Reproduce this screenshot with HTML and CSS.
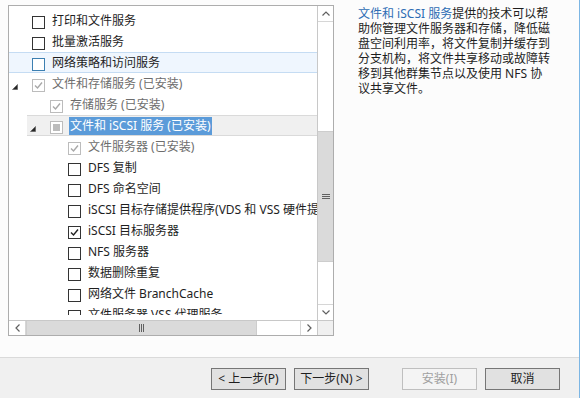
FILE: index.html
```html
<!DOCTYPE html>
<html lang="zh-CN">
<head>
<meta charset="utf-8">
<title>添加角色和功能</title>
<link rel="stylesheet" href="styles.css">
</head>
<body>
<div class="window">
  <div class="main">
    <div class="tree-box">
      <div class="tree-view">
        <div class="tree">
          <div class="row lv1"><span class="exp"></span><span class="cb"></span><span class="label">打印和文件服务</span></div>
          <div class="row lv1"><span class="exp"></span><span class="cb"></span><span class="label">批量激活服务</span></div>
          <div class="row lv1 hover"><span class="exp"></span><span class="cb"></span><span class="label">网络策略和访问服务</span></div>
          <div class="row lv1 off"><span class="exp"><svg width="6" height="6" viewBox="0 0 6 6"><polygon points="5.5,0.5 5.5,5.5 0.5,5.5" fill="#262626" stroke="#555" stroke-width="0.6"/></svg></span><span class="cb"><svg width="11" height="11" viewBox="0 0 11 11"><polyline points="2,5.5 4.5,8 9,2.5" fill="none" stroke="#a8a8a8" stroke-width="1.4"/></svg></span><span class="label">文件和存储服务 (已安装)</span></div>
          <div class="row lv2 off"><span class="exp"></span><span class="cb"><svg width="11" height="11" viewBox="0 0 11 11"><polyline points="2,5.5 4.5,8 9,2.5" fill="none" stroke="#a8a8a8" stroke-width="1.4"/></svg></span><span class="label">存储服务 (已安装)</span></div>
          <div class="row lv2 off sel"><span class="exp"><svg width="6" height="6" viewBox="0 0 6 6"><polygon points="5.5,0.5 5.5,5.5 0.5,5.5" fill="#262626" stroke="#555" stroke-width="0.6"/></svg></span><span class="cb ind"><span class="fill"></span></span><span class="label">文件和 iSCSI 服务 (已安装)</span></div>
          <div class="row lv3 off"><span class="exp"></span><span class="cb"><svg width="11" height="11" viewBox="0 0 11 11"><polyline points="2,5.5 4.5,8 9,2.5" fill="none" stroke="#a8a8a8" stroke-width="1.4"/></svg></span><span class="label">文件服务器 (已安装)</span></div>
          <div class="row lv3"><span class="exp"></span><span class="cb"></span><span class="label">DFS 复制</span></div>
          <div class="row lv3"><span class="exp"></span><span class="cb"></span><span class="label">DFS 命名空间</span></div>
          <div class="row lv3"><span class="exp"></span><span class="cb"></span><span class="label">iSCSI 目标存储提供程序(VDS 和 VSS 硬件提供程序)</span></div>
          <div class="row lv3"><span class="exp"></span><span class="cb"><svg width="11" height="11" viewBox="0 0 11 11"><polyline points="2,5.5 4.5,8 9,2.5" fill="none" stroke="#222" stroke-width="1.4"/></svg></span><span class="label">iSCSI 目标服务器</span></div>
          <div class="row lv3"><span class="exp"></span><span class="cb"></span><span class="label">NFS 服务器</span></div>
          <div class="row lv3"><span class="exp"></span><span class="cb"></span><span class="label">数据删除重复</span></div>
          <div class="row lv3"><span class="exp"></span><span class="cb"></span><span class="label">网络文件 BranchCache</span></div>
          <div class="row lv3"><span class="exp"></span><span class="cb"></span><span class="label">文件服务器 VSS 代理服务</span></div>
        </div>
      </div>
      <div class="vscroll">
        <div class="sbtn vup"><svg width="8" height="5" viewBox="0 0 8 5"><polyline points="0.5,4.5 4,1 7.5,4.5" fill="none" stroke="#606060" stroke-width="1.2"/></svg></div>
        <div class="vtrack-top"></div>
        <div class="vthumb"><svg width="8" height="7" viewBox="0 0 8 7"><path d="M0 1.5H8M0 3.5H8M0 5.5H8" stroke="#606060" stroke-width="1"/></svg></div>
        <div class="vtrack-bottom"></div>
        <div class="sbtn vdown"><svg width="8" height="5" viewBox="0 0 8 5"><polyline points="0.5,0.5 4,4 7.5,0.5" fill="none" stroke="#606060" stroke-width="1.2"/></svg></div>
      </div>
      <div class="hscroll">
        <div class="sbtn hleft"><svg width="5" height="8" viewBox="0 0 5 8"><polyline points="4.5,0.5 1,4 4.5,7.5" fill="none" stroke="#606060" stroke-width="1.2"/></svg></div>
        <div class="hthumb"><svg width="7" height="8" viewBox="0 0 7 8"><path d="M1.5 0V8M3.5 0V8M5.5 0V8" stroke="#606060" stroke-width="1"/></svg></div>
        <div class="htrack"></div>
        <div class="sbtn hright"><svg width="5" height="8" viewBox="0 0 5 8"><polyline points="0.5,0.5 4,4 0.5,7.5" fill="none" stroke="#606060" stroke-width="1.2"/></svg></div>
      </div>
      <div class="corner"></div>
    </div>
    <p class="desc"><span class="link">文件和 iSCSI 服务</span>提供的技术可以帮助你管理文件服务器和存储，降低磁盘空间利用率，将文件复制并缓存到分支机构，将文件共享移动或故障转移到其他群集节点以及使用 NFS 协议共享文件。</p>
  </div>
  <div class="footer">
    <button class="btn">&lt; 上一步(P)</button>
    <button class="btn">下一步(N) &gt;</button>
    <button class="btn disabled gap">安装(I)</button>
    <button class="btn">取消</button>
  </div>
</div>
</body>
</html>
```
FILE: styles.css
```css
html, body {
  margin: 0;
  padding: 0;
}

body {
  font-family: "Segoe UI", "Noto Sans", "Noto Sans CJK SC", sans-serif;
  font-size: 12px;
  color: #1e1e1e;
  background: #fcfcfc;
}

.window {
  width: 580px;
  height: 398px;
  box-sizing: border-box;
  border-right: 1px solid #7cb6e4;
  display: flex;
  flex-direction: column;
}

.main {
  height: 357px;
  box-sizing: border-box;
  display: flex;
  align-items: flex-start;
  gap: 24px;
  padding: 5px 0 0 8px;
}

/* tree box */
.tree-box {
  width: 326px;
  height: 331px;
  box-sizing: border-box;
  border: 1px solid #adadad;
  background: #fff;
  display: grid;
  grid-template-columns: 308px 16px;
  grid-template-rows: 314px 15px;
}

.tree-view {
  overflow: hidden;
  margin-bottom: 5px;
}

.tree {
  width: max-content;
  min-width: 100%;
  padding-top: 4px;
}

.row {
  height: 21px;
  box-sizing: border-box;
  border-top: 1px solid transparent;
  border-bottom: 1px solid transparent;
  display: flex;
  align-items: center;
  white-space: nowrap;
}

.lv2 { margin-left: 18px; }
.lv3 { margin-left: 36px; }

.row.hover {
  background: #eff6fe;
  border-color: #c5dcf3;
}

.row.sel {
  background: #f0f0f0;
  border-color: #dadada;
}

.exp {
  width: 23px;
  flex: none;
  align-self: stretch;
}

.exp svg {
  display: block;
  margin: 10px 0 0 3px;
}

.cb {
  width: 13px;
  height: 13px;
  box-sizing: border-box;
  flex: none;
  align-self: flex-start;
  margin-top: 5px;
  border: 1px solid #333;
  background: #fff;
}

.cb svg {
  display: block;
}

.row.hover .cb {
  border-color: #3c7fb1;
}

.row.off .cb {
  border-color: #bcbcbc;
}

.cb.ind {
  padding: 2px;
}

.cb.ind .fill {
  display: block;
  width: 7px;
  height: 7px;
  background: #bcbcbc;
}

.label {
  margin-left: 7px;
  line-height: 19px;
  color: #1e1e1e;
}

.row.off .label {
  color: #6d6d6d;
}

.row.sel .label {
  margin-left: 6px;
  padding: 0 1px;
  line-height: 18px;
  background: #5b9bd9;
  color: #fff;
}

/* scrollbars */
.vscroll {
  border-left: 1px solid #c8c8c8;
  display: flex;
  flex-direction: column;
  background: #fff;
}

.sbtn {
  display: flex;
  align-items: center;
  justify-content: center;
  flex: none;
  background: #fff;
}

.vup {
  height: 16px;
  border-bottom: 1px solid #d6d6d6;
  box-sizing: border-box;
}

.vdown {
  height: 16px;
  border-top: 1px solid #d6d6d6;
  box-sizing: border-box;
}

.vtrack-top {
  height: 109px;
  flex: none;
}

.vthumb {
  height: 131px;
  flex: none;
  background: #dadada;
  border-top: 1px solid #cdcdcd;
  border-bottom: 1px solid #cdcdcd;
  box-sizing: border-box;
  display: flex;
  align-items: center;
  justify-content: center;
}

.vtrack-bottom {
  flex: 1;
}

.hscroll {
  border-top: 1px solid #c8c8c8;
  display: flex;
  background: #fff;
}

.hleft {
  width: 17px;
  border-right: 1px solid #d6d6d6;
  box-sizing: border-box;
}

.hright {
  width: 17px;
  border-left: 1px solid #d6d6d6;
  box-sizing: border-box;
}

.hthumb {
  width: 231px;
  flex: none;
  background: #dadada;
  border-left: 1px solid #cdcdcd;
  border-right: 1px solid #cdcdcd;
  box-sizing: border-box;
  display: flex;
  align-items: center;
  justify-content: center;
}

.htrack {
  flex: 1;
}

.corner {
  background: #f0f0f0;
  border-left: 1px solid #c8c8c8;
  border-top: 1px solid #c8c8c8;
}

/* description */
.desc {
  margin: 1px 0 0 0;
  width: 196px;
  line-height: 15px;
  color: #1e1e1e;
}

.link {
  color: #2e6db4;
}

/* footer */
.footer {
  flex: 1;
  border-top: 1px solid #dadada;
  background: #f0f0f0;
  display: flex;
  justify-content: flex-end;
  align-items: flex-start;
  gap: 8px;
  padding: 10px 19px 0 0;
}

.btn {
  width: 75px;
  height: 22px;
  box-sizing: border-box;
  border: 1px solid #767676;
  background: #e1e1e1;
  color: #1e1e1e;
  font-family: "Segoe UI", "Noto Sans", "Noto Sans CJK SC", sans-serif;
  font-size: 12px;
  line-height: 18px;
  padding: 0;
  text-align: center;
}

.btn.disabled {
  border-color: #bfbfbf;
  background: #f4f4f4;
  color: #a0a0a0;
}

.btn.gap {
  margin-left: 25px;
}
```
